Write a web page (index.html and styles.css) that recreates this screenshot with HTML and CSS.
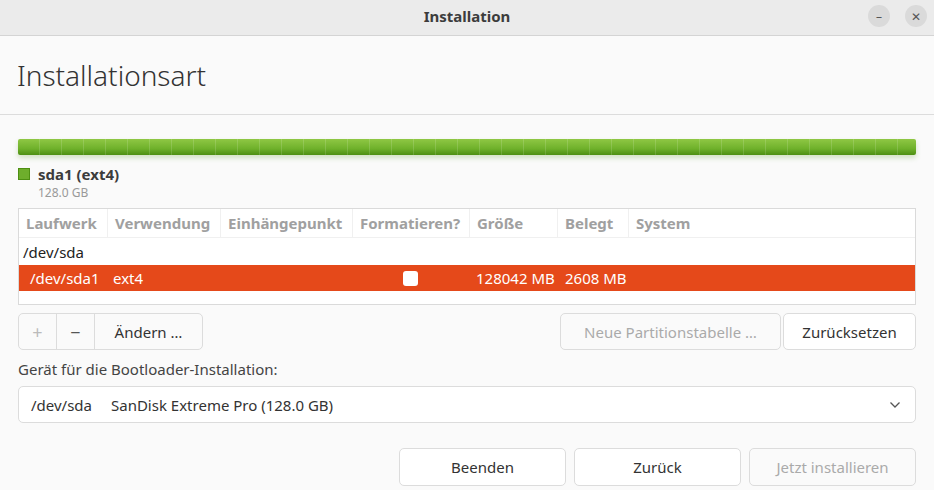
FILE: index.html
```html
<!DOCTYPE html>
<html lang="de">
<head>
    <meta charset="UTF-8">
    <title>Installation</title>
    <link rel="stylesheet" href="styles.css">
</head>
<body>
    <div class="titlebar">
        <span class="wtitle">Installation</span>
        <div class="wbtns">
            <span class="wbtn">&ndash;</span>
            <span class="wbtn">&#x2715;</span>
        </div>
    </div>
    <div class="main">
        <h1>Installationsart</h1>
        <div class="diskbar"></div>
        <div class="legend">
            <span class="swatch"></span>
            <div>
                <p class="pname">sda1 (ext4)</p>
                <p class="psize">128.0 GB</p>
            </div>
        </div>
        <div class="table">
            <div class="row head">
                <span class="c1">Laufwerk</span>
                <span class="c2">Verwendung</span>
                <span class="c3">Einhängepunkt</span>
                <span class="c4">Formatieren?</span>
                <span class="c5">Größe</span>
                <span class="c6">Belegt</span>
                <span class="c7">System</span>
            </div>
            <div class="row dev">
                <span>/dev/sda</span>
            </div>
            <div class="row sel">
                <span class="c1 ind">/dev/sda1</span>
                <span class="c2">ext4</span>
                <span class="c3"></span>
                <span class="c4"><i class="check"></i></span>
                <span class="c5">128042 MB</span>
                <span class="c6">2608 MB</span>
                <span class="c7"></span>
            </div>
        </div>
        <div class="tools">
            <div class="group">
                <button class="gbtn sq dim">+</button>
                <button class="gbtn sq">&minus;</button>
                <button class="gbtn wide">Ändern …</button>
            </div>
            <div class="right">
                <button class="btn dis newtable">Neue Partitionstabelle …</button>
                <button class="btn reset">Zurücksetzen</button>
            </div>
        </div>
        <p class="label">Gerät für die Bootloader-Installation:</p>
        <div class="combo">
            <span><span class="cdev">/dev/sda</span>SanDisk Extreme Pro (128.0 GB)</span>
            <svg width="12" height="8" viewBox="0 0 12 8"><path d="M1.5 1.5 L6 6 L10.5 1.5" fill="none" stroke="#555" stroke-width="1.3"/></svg>
        </div>
        <div class="footer">
            <button class="btn fbtn">Beenden</button>
            <button class="btn fbtn">Zurück</button>
            <button class="btn fbtn dis">Jetzt installieren</button>
        </div>
    </div>
</body>
</html>
```

FILE: styles.css
```css
*{margin: 0;padding: 0;box-sizing: border-box;}
body{background:#fafafa; color:#333; font-family:"Noto Sans","Open Sans",sans-serif; font-size:15px; width:934px; height:490px; overflow:hidden;}
button{font-family:inherit; font-size:15px; color:#333; background:#fff; cursor:default;}

.titlebar{height:36px; background:#ebebeb; border-bottom:1px solid #d4d4d4; display:flex; align-items:center; justify-content:center; position:relative; padding-bottom:3px;}
.wtitle{font-weight:bold; font-size:15px; color:#3c3c3c;}
.wbtns{position:absolute; right:7px; top:5px; display:flex; gap:15px;}
.wbtn{width:22px; height:22px; border-radius:50%; background:#dadada; color:#555; font-size:12px; display:flex; align-items:center; justify-content:center;}

.main{padding:0 18px;}
h1{height:79px; line-height:79px; font-weight:300; font-size:28px; color:#333; border-bottom:1px solid #dcdcdc; margin:0 -18px; padding-left:17px;}

.diskbar{margin-top:24px; height:16px; border-radius:2px;
    background:
        repeating-linear-gradient(90deg, transparent 0 21px, rgba(255,255,255,.14) 21px 22px),
        linear-gradient(#8fc744, #6fb12b 60%, #4e8f12);
    box-shadow:0 3px 5px rgba(90,150,30,.25);}

.legend{display:flex; gap:8px; margin-top:11px; height:42px;}
.swatch{width:12px; height:12px; background:#6eae2c; border:1px solid #4e8f12; margin-top:2px;}
.pname{font-weight:bold; font-size:15px; line-height:16px; color:#3c3c3c;}
.psize{font-size:12px; color:#999; line-height:21px;}

.table{height:97px; background:#fff; border:1px solid #dadada;}
.row{display:flex; align-items:center; white-space:nowrap;}
.row span{display:block;}
.head{height:29px; color:#a0a0a0; font-weight:bold; font-size:15px; border-bottom:1px solid #f0f0f0;}
.head span{padding-left:7px; border-right:1px solid #f0f0f0; height:29px; line-height:28px;}
.c1{width:89px;}
.c2{width:113px;}
.c3{width:132px;}
.c4{width:117px;}
.c5{width:88px;}
.c6{width:71px;}
.c7{width:80px;}
.head .c7{border-right:none;}
.dev{height:27px; padding-left:4px; font-size:15px; color:#222;}
.sel{height:26px; background:#e5491a; color:#fff; font-size:15px;}
.sel span{padding-left:7px;}
.sel .ind{padding-left:11px;}
.sel .c2{padding-left:5px;}
.sel .c4{display:flex; justify-content:center; padding-left:0; padding-right:2px;}
.sel .c5{padding-left:6px;}
.check{display:block; width:15px; height:15px; background:#fff; border-radius:3px;}

.tools{display:flex; justify-content:space-between; margin-top:8px; height:37px;}
.group{display:flex; border:1px solid #dcdcdc; border-radius:5px; background:#fafafa; overflow:hidden;}
.gbtn{border:none; border-right:1px solid #dcdcdc; background:transparent; height:35px;}
.gbtn.sq{width:38px; font-size:18px; color:#555;}
.gbtn.dim{color:#bbb;}
.gbtn.wide{width:107px; border-right:none;}
.right{display:flex; gap:2px;}
.btn{height:37px; border:1px solid #dcdcdc; border-radius:5px; background:#fff;}
.btn.dis{background:#fafafa; color:#aaa;}
.newtable{width:221px;}
.reset{width:133px;}

.label{margin-top:10px; margin-bottom:8px; height:18px; line-height:18px; font-size:15px; color:#444;}
.combo{height:37px; background:#fff; border:1px solid #dcdcdc; border-radius:5px; display:flex; align-items:center; justify-content:space-between; padding:0 14px 0 12px; color:#333;}
.cdev{display:inline-block; width:80px;}

.footer{display:flex; justify-content:flex-end; gap:8px; margin-top:25px;}
.fbtn{width:167px; height:38px;}
.fbtn.dis{width:167px;}
```
